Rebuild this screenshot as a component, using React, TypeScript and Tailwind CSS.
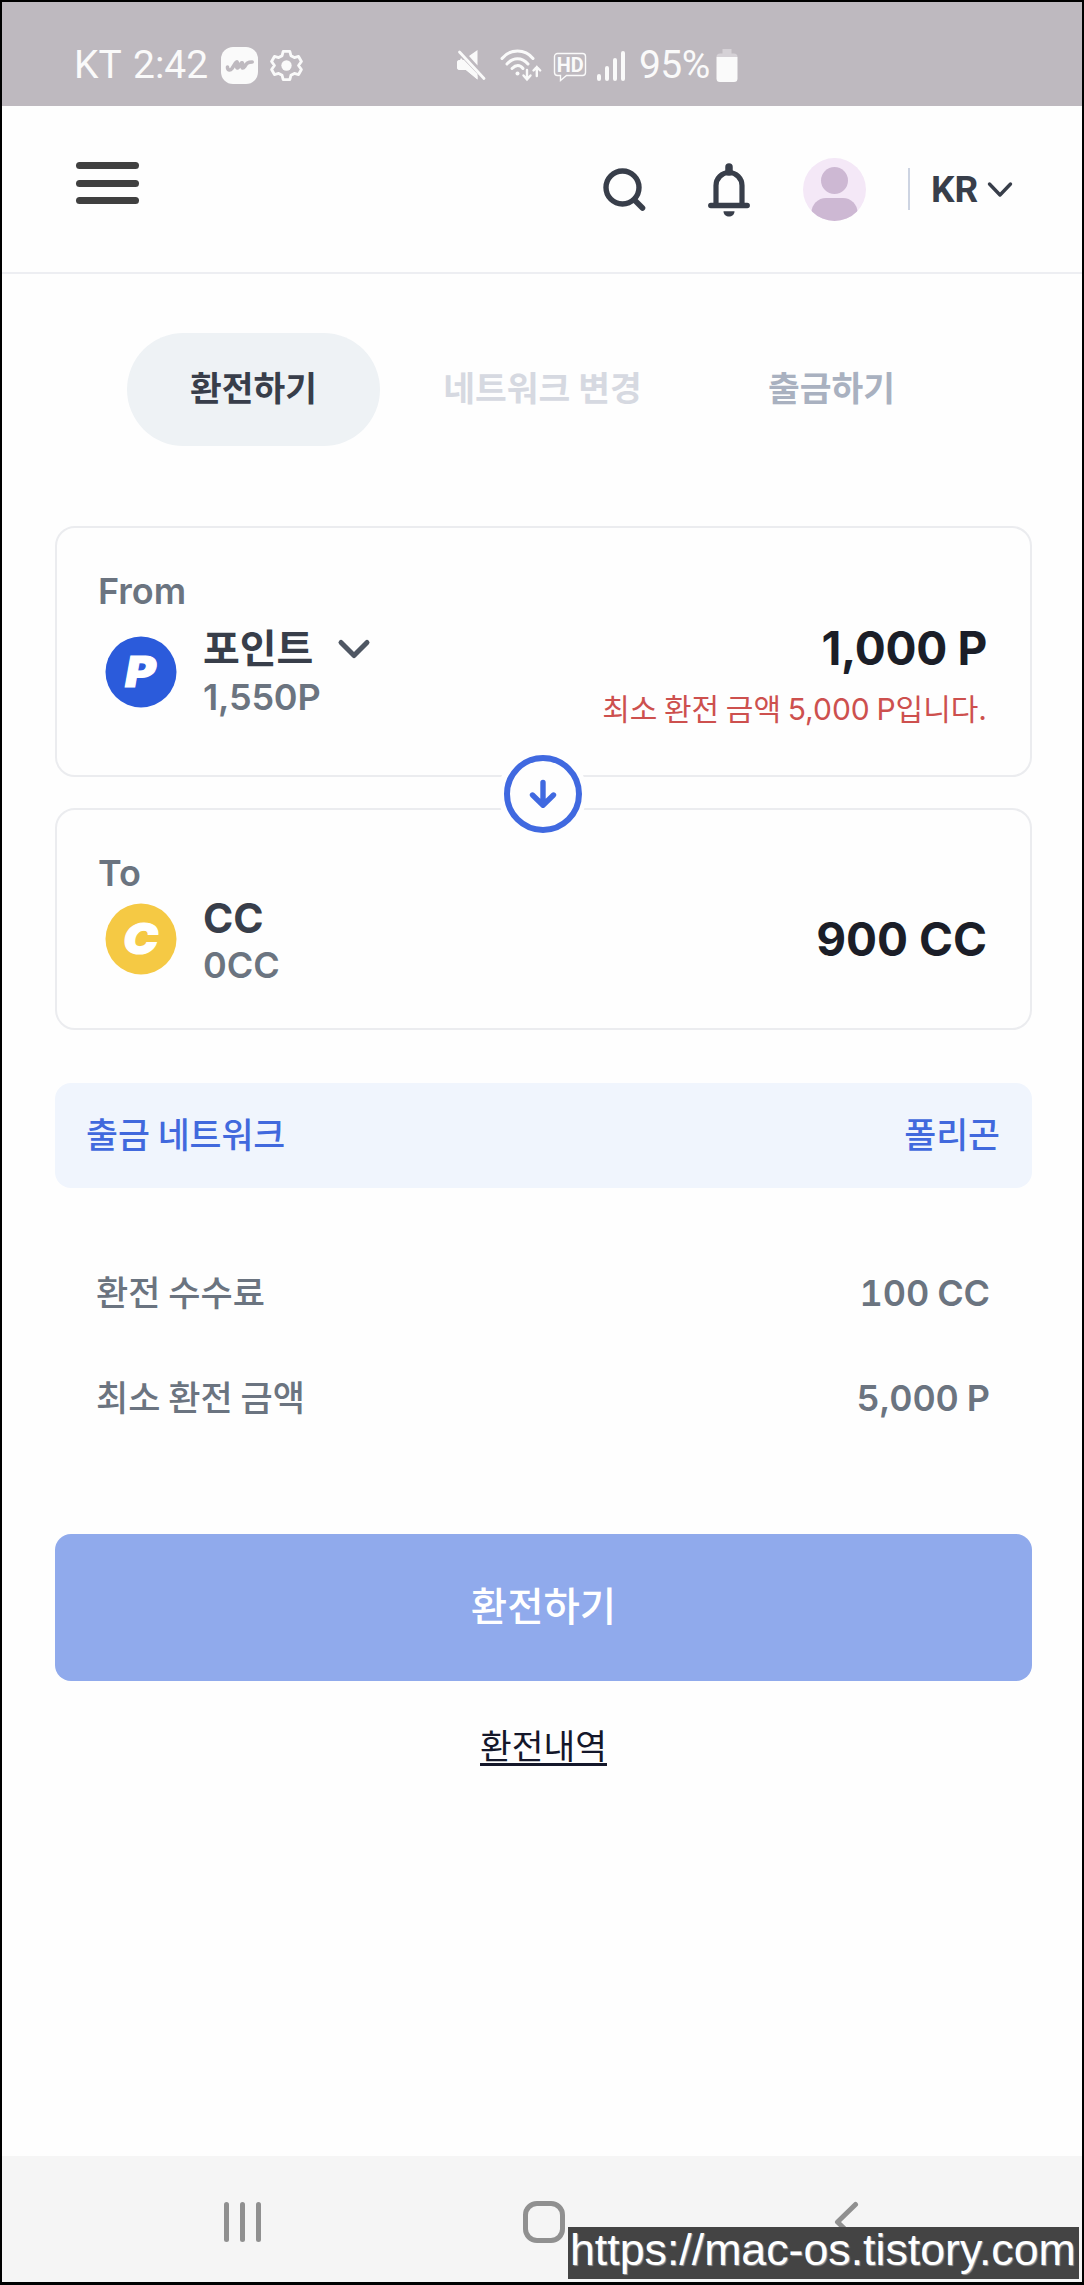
import { useState } from "react";

const FONT = "font-['Inter','Noto_Sans_CJK_KR',sans-serif]";
const KR = "font-['Noto_Sans_CJK_KR',sans-serif]";

const tabs = [
  { id: "exchange", label: "환전하기", style: "w-[253px] text-[#383e4a]" },
  { id: "network", label: "네트워크 변경", style: "w-[325px] text-[#d6d9e1]" },
  { id: "withdraw", label: "출금하기", style: "w-[253px] text-[#a9b1c0]" },
];

const fees = [
  { label: "환전 수수료", value: "100 CC" },
  { label: "최소 환전 금액", value: "5,000 P" },
];

function StatusBar() {
  return (
    <div className="flex h-[104px] shrink-0 items-start bg-[#beb9bf] pl-[72px] pt-[40px] font-['Roboto',sans-serif] text-[39px] leading-[47px] text-[#fafafa]">
      <span className="w-[59px]">KT</span>
      <span className="w-[88px]">2:42</span>
      <svg className="mt-[5px]" width="37" height="37" viewBox="0 0 37 37">
        <rect width="37" height="37" rx="12" fill="#fafafa" />
        <path
          d="M6.500 20c0 4 3 3.500 4.500 1.500l3.500-5.500c1.500-2 2.500-1 1.500 1.500-1 3 0 5 2 2l2-3c1.500-1.500 2 0 1.200 2.200-.7 3 1 3 2.500.8 2-3.500 3-4.500 7.500-4.500"
          fill="none"
          stroke="#beb9bf"
          strokeWidth="3.600"
          strokeLinecap="round"
          strokeLinejoin="round"
        />
      </svg>
      <svg className="ml-[12px] mt-[7px]" width="33" height="33" viewBox="0 0 35 35">
        <path
          d="M14 2.500h7l1.200 4.600 3.600 2 4.500-1.200 3 5.400-3 4.200 3 4.200-3 5.400-4.500-1.200-3.600 2-1.200 4.600h-7l-1.200-4.600-3.600-2-4.500 1.200-3-5.400 3-4.200-3-4.200 3-5.400 4.500 1.200 3.600-2z"
          fill="none"
          stroke="#fafafa"
          strokeWidth="3"
          strokeLinejoin="round"
        />
        <circle cx="17.500" cy="17.500" r="5.500" fill="#fafafa" />
      </svg>
      <svg className="ml-[153px] mt-[7px]" width="31" height="32" viewBox="0 0 31 32">
        <path
          d="M4 11h4L21.500 25v5.500L10 21H4a3 3 0 0 1-3-3v-4a3 3 0 0 1 3-3zM21.500 1v15.500L13 7z"
          fill="#fafafa"
        />
        <path d="M5 9l16.500 18v3.500L10 21H4a3 3 0 0 1-3-3v-4a3 3 0 0 1 3-3z" fill="#fafafa" />
        <path d="M3.500 3l24.500 26.500" stroke="#fafafa" strokeWidth="2.800" strokeLinecap="round" />
      </svg>
      <svg className="ml-[13px] mt-[7px]" width="42" height="33" viewBox="0 0 42 33" fill="none">
        <g stroke="#fafafa" strokeWidth="3" strokeLinecap="round">
          <path d="M2 9.500C10-.500 25-.500 33 9.500" />
          <path d="M7 15c6-7 15-7 21 0" />
          <path d="M12 19.500c4-4 8-4 11 0" />
          <path d="M27 21v9m-3.500-3.500 3.500 4 3.500-4M36.800 27v-9m-3.300 3.500 3.300-3.500 3.400 3.500" strokeWidth="2.400" />
        </g>
        <circle cx="17.500" cy="24.500" r="2" fill="#fafafa" />
      </svg>
      <svg className="ml-[11px] mt-[10px]" width="35" height="31" viewBox="0 0 35 31">
        <path
          d="M4.500 1.500h25a3 3 0 0 1 3 3v16a3 3 0 0 1-3 3h-16l-6 5v-5h-3a3 3 0 0 1-3-3v-16a3 3 0 0 1 3-3z"
          fill="none"
          stroke="#fafafa"
          strokeWidth="1.400"
        />
        <text
          x="3.800"
          y="20"
          fontSize="21"
          fontWeight="700"
          textLength="27"
          lengthAdjust="spacingAndGlyphs"
          fill="#fafafa"
        >
          HD
        </text>
      </svg>
      <div className="ml-[9px] mt-[9px] flex h-[30px] items-end gap-[4px]">
        <i className="h-[7px] w-[4px] rounded-full bg-[#fafafa]" />
        <i className="h-[15px] w-[4px] rounded-full bg-[#fafafa]" />
        <i className="h-[23px] w-[4px] rounded-full bg-[#fafafa]" />
        <i className="h-[30px] w-[4px] rounded-full bg-[#fafafa]" />
      </div>
      <span className="ml-[14px] w-[77px] tracking-[-0.6px]">95%</span>
      <svg className="mt-[7px]" width="22" height="34" viewBox="0 0 22 34">
        <path d="M6.500 0h9v4.500H18a3.500 3.500 0 0 1 3.500 3.500h-21A3.500 3.500 0 0 1 4 4.500h2.500z" fill="#d5d1d6" />
        <path d="M.5 8h21v21.500a3.500 3.500 0 0 1-3.500 3.500H4A3.500 3.500 0 0 1 .5 29.500z" fill="#fafafa" />
      </svg>
    </div>
  );
}

function Header() {
  return (
    <header className="flex h-[168px] shrink-0 items-start border-b-2 border-[#edeef2] pl-[74px]">
      <button className="mt-[56px] flex w-[63px] flex-col gap-[10.500px]">
        <i className="h-[7px] w-full rounded-full bg-[#404040]" />
        <i className="h-[7px] w-full rounded-full bg-[#404040]" />
        <i className="h-[7px] w-full rounded-full bg-[#404040]" />
      </button>
      <svg className="ml-[463px] mt-[61px]" width="46" height="46" viewBox="0 0 46 46" fill="none" stroke="#383e4a">
        <circle cx="20.500" cy="20.500" r="16.500" strokeWidth="5.400" />
        <path d="M32.500 33l8 8" strokeWidth="5.600" strokeLinecap="round" />
      </svg>
      <svg className="ml-[60px] mt-[57px]" width="42" height="54" viewBox="0 0 42 54" fill="none">
        <path d="M8 42V22.500a13 13 0 0 1 26 0V42" stroke="#383e4a" strokeWidth="5.200" />
        <path d="M2.800 42.500h36.400" stroke="#383e4a" strokeWidth="5.400" strokeLinecap="round" />
        <path d="M21 4v5" stroke="#383e4a" strokeWidth="7.500" strokeLinecap="round" />
        <path d="M15.500 48.300h11c0 7-11 7-11 0z" fill="#383e4a" />
      </svg>
      <svg className="ml-[53px] mt-[52px]" width="63" height="63" viewBox="0 0 63 63">
        <clipPath id="avatar">
          <circle cx="31.500" cy="31.500" r="31.500" />
        </clipPath>
        <g clipPath="url(#avatar)">
          <rect width="63" height="63" fill="#f4e8f7" />
          <circle cx="31.500" cy="22.500" r="13.500" fill="#cdb8d3" />
          <rect x="8.500" y="40" width="46" height="36" rx="14.500" fill="#cdb8d3" />
        </g>
      </svg>
      <div className="ml-[42px] mt-[62px] h-[42px] w-[2px] bg-[#cdd4e2]" />
      <button className="ml-[21px] mt-[63px] flex items-center font-['Roboto',sans-serif] text-[37px] font-bold leading-[42px] text-[#383e4a]">
        <span className="w-[56px] text-left">KR</span>
        <svg width="26" height="18" viewBox="0 0 26 18" fill="none">
          <path d="M2.500 3L13 14 23.500 3" stroke="#383e4a" strokeWidth="3.400" strokeLinecap="round" strokeLinejoin="round" />
        </svg>
      </button>
    </header>
  );
}

function Coin({ letter, color }: { letter: string; color: string }) {
  return (
    <svg width="72" height="72" viewBox="0 0 72 72">
      <circle cx="36" cy="36" r="35.500" fill={color} />
      <text
        transform="translate(35.500 51) scale(1.1 1)"
        textAnchor="middle"
        fontSize="42"
        fontWeight="900"
        fontStyle="italic"
        fill="#fff"
        stroke="#fff"
        strokeWidth="1.200"
      >
        {letter}
      </text>
    </svg>
  );
}

export default function App() {
  const [active, setActive] = useState("exchange");

  return (
    <div className={`relative flex h-[2285px] w-[1084px] flex-col overflow-hidden border-2 border-b-[3px] border-black bg-[#fefefe] ${FONT}`}>
      <StatusBar />
      <Header />

      <main className="flex flex-1 flex-col pl-[53px] pr-[50px]">
        {/* TABS */}
        <nav className={`mt-[59px] flex h-[113px] pl-[72px] text-[34.500px] font-bold ${KR}`}>
          {tabs.map((t) => (
            <button
              key={t.id}
              onClick={() => setActive(t.id)}
              className={`rounded-full pb-[5px] ${t.style} ${active === t.id ? "bg-[#eef2f5]" : ""}`}
            >
              {t.label}
            </button>
          ))}
        </nav>

        {/* FROM */}
        <section className="mt-[80px] flex h-[251px] justify-between rounded-[20px] border-2 border-[#ebecef] pl-[41px] pr-[43px]">
          <div>
            <p className="mt-[41px] text-[36px] font-semibold leading-[44px] text-[#6b7480]">From</p>
            <div className="flex">
              <div className="ml-[7px] mt-[23px]">
                <Coin letter="P" color="#2b5bdb" />
              </div>
              <div className="ml-[26px] mt-[4px]">
                <div className="flex h-[58px] items-center text-[#383e4a]">
                  <span className={`w-[134px] text-[40px] font-bold leading-[58px] ${KR}`}>포인트</span>
                  <svg className="mt-[5px]" width="34" height="22" viewBox="0 0 34 22" fill="none">
                    <path d="M4 4.500L17 17.500 30 4.500" stroke="#4f5763" strokeWidth="5" strokeLinecap="round" strokeLinejoin="round" />
                  </svg>
                </div>
                <p className="text-[36px] font-semibold leading-[44px] tracking-[-0.2px] text-[#6b7480]">1,550P</p>
              </div>
            </div>
          </div>
          <div className="text-right">
            <p className="mt-[92px] text-[46px] font-bold leading-[56px] tracking-[-0.3px] text-[#1b1e28]">1,000 P</p>
            <p className="mt-[11px] text-[30px] leading-[44px] text-[#cd504e] [word-spacing:-1.800px]">최소 환전 금액 5,000 P입니다.</p>
          </div>
        </section>

        {/* switch button overlaps both cards */}
        <div className="relative z-10 mb-[-30px] ml-[443px] mt-[-28px] flex h-[89px] w-[89px] items-center justify-center rounded-full bg-[#fefefe]">
          <button className="flex h-[78px] w-[78px] items-center justify-center rounded-full border-[6px] border-[#4069e0]">
            <svg width="30" height="30" viewBox="0 0 30 30" fill="none">
              <path d="M15 3.500V26M4.500 16L15 26.200 25.500 16" stroke="#4069e0" strokeWidth="5.400" strokeLinecap="round" strokeLinejoin="round" />
            </svg>
          </button>
        </div>

        {/* TO */}
        <section className="flex h-[222px] justify-between rounded-[20px] border-2 border-[#ebecef] pl-[41px] pr-[43px]">
          <div>
            <p className="mt-[41px] text-[36px] font-semibold leading-[44px] text-[#6b7480]">To</p>
            <div className="flex">
              <div className="ml-[7px] mt-[8px]">
                <Coin letter="C" color="#f5c944" />
              </div>
              <div className="ml-[26px]">
                <p className="text-[41px] font-bold leading-[46px] text-[#383e4a]">CC</p>
                <p className="text-[36px] font-semibold leading-[48px] text-[#6b7480]">0CC</p>
              </div>
            </div>
          </div>
          <p className="mt-[101px] text-[46px] font-bold leading-[56px] text-[#1b1e28]">900 CC</p>
        </section>

        {/* NETWORK */}
        <div className={`mt-[53px] flex h-[105px] items-center justify-between rounded-[16px] bg-[#f0f5fd] pb-[4px] pl-[31px] pr-[32px] text-[34.700px] font-medium text-[#4169dd] ${KR}`}>
          <span>출금 네트워크</span>
          <span>폴리곤</span>
        </div>

        {/* FEES */}
        <div className="mt-[52px] pl-[41px] pr-[42px] text-[#6b7480]">
          {fees.map((f) => (
            <div key={f.label} className="flex h-[105px] items-center justify-between">
              <span className={`pb-[2px] text-[35px] font-medium ${KR}`}>{f.label}</span>
              <span className="text-[36px] font-semibold tabular-nums tracking-[-0.1px] [word-spacing:-1.500px]">{f.value}</span>
            </div>
          ))}
        </div>

        <button className={`mt-[84px] h-[147px] shrink-0 rounded-[16px] bg-[#90aaec] pb-[7px] text-[39.500px] font-medium text-white ${KR}`}>
          환전하기
        </button>
        <a className={`mx-auto mt-[38px] text-[34.500px] leading-[50px] text-[#14172a] underline decoration-[3px] underline-offset-[4px] [text-decoration-skip-ink:none] ${KR}`}>
          환전내역
        </a>
      </main>

      {/* ANDROID NAV */}
      <footer className="flex h-[126px] shrink-0 items-start bg-[#f5f5f5] pl-[222px] pt-[45px]">
        <div className="mt-[1px] flex gap-[11px]">
          <i className="h-[40px] w-[5px] rounded-full bg-[#909090]" />
          <i className="h-[40px] w-[5px] rounded-full bg-[#909090]" />
          <i className="h-[40px] w-[5px] rounded-full bg-[#909090]" />
        </div>
        <div className="ml-[262px] h-[42px] w-[42px] rounded-[14px] border-[5px] border-[#909090]" />
        <svg className="ml-[269px]" width="26" height="42" viewBox="0 0 26 42" fill="none">
          <path d="M21.500 3.500L3.500 21l18 17.500" stroke="#909090" strokeWidth="5" strokeLinecap="round" strokeLinejoin="round" />
        </svg>
      </footer>

      <div className="absolute bottom-[3px] right-[3px] h-[52px] w-[511px] whitespace-nowrap bg-[#444] pl-[2px] font-['Liberation_Sans',sans-serif] text-[44.700px] leading-[46px] text-white [text-shadow:1px_1px_1px_#999]">
        https://mac-os.tistory.com
      </div>
    </div>
  );
}
